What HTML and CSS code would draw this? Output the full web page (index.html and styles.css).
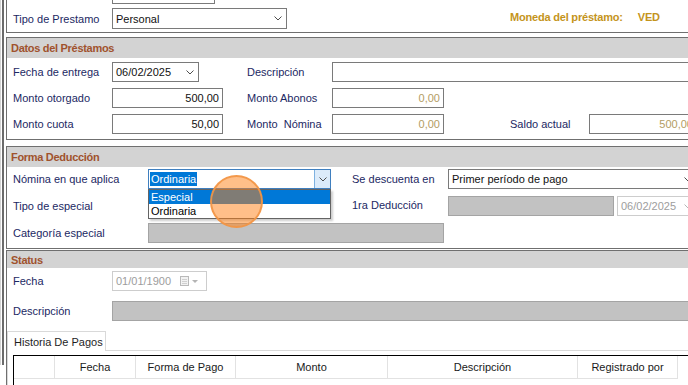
FILE: index.html
```html
<!DOCTYPE html>
<html lang="es">
<head>
  <meta charset="UTF-8">
  <title>Préstamo</title>
  <link rel="stylesheet" href="styles.css">
</head>
<body>
<div class="frame">
<div class="window">

  <!-- encabezado del préstamo -->
  <div class="group top-group">
    <div class="row">
      <span class="label lw99"></span>
      <div class="field w103"></div>
    </div>
    <div class="row row-21">
      <span class="label lw99">Tipo de Prestamo</span>
      <div class="combo w175"><span>Personal</span><svg class="chev" width="8" height="5" viewBox="0 0 8 5"><path d="M0.5 0.5 4 4 7.5 0.5"/></svg></div>
      <span class="currency">Moneda del préstamo:<span class="cur-code">VED</span></span>
    </div>
  </div>

  <section class="group datos">
    <div class="group-title">Datos del Préstamos</div>
    <div class="group-body">
      <div class="row">
        <span class="label lw99">Fecha de entrega</span>
        <div class="combo w87"><span>06/02/2025</span><svg class="chev" width="8" height="5" viewBox="0 0 8 5"><path d="M0.5 0.5 4 4 7.5 0.5"/></svg></div>
        <span class="label lw85 ml48">Descripción</span>
        <div class="field w380"></div>
      </div>
      <div class="row">
        <span class="label lw99">Monto otorgado</span>
        <div class="field num w111">500,00</div>
        <span class="label lw85 ml24">Monto Abonos</span>
        <div class="field num muted w112">0,00</div>
      </div>
      <div class="row">
        <span class="label lw99">Monto cuota</span>
        <div class="field num w111">50,00</div>
        <span class="label lw85 ml24">Monto&nbsp; Nómina</span>
        <div class="field num muted w112">0,00</div>
        <span class="label lw79 ml66">Saldo actual</span>
        <div class="field num muted w108">500,00</div>
      </div>
    </div>
  </section>

  <section class="group forma">
    <div class="group-title">Forma Deducción</div>
    <div class="group-body">
      <div class="row">
        <span class="label lw135">Nómina en que aplica</span>
        <div class="combo-wrap w183">
          <div class="combo focus">
            <span class="selected">Ordinaria</span>
            <span class="drop-btn"><svg class="chev" width="8" height="5" viewBox="0 0 8 5"><path d="M0.5 0.5 4 4 7.5 0.5"/></svg></span>
          </div>
          <ul class="drop-list">
            <li class="active">Especial</li>
            <li>Ordinaria</li>
          </ul>
          <div class="cursor-ring"></div>
        </div>
        <span class="label lw96 ml21">Se descuenta en</span>
        <div class="combo w249"><span>Primer período de pago</span><svg class="chev" width="8" height="5" viewBox="0 0 8 5"><path d="M0.5 0.5 4 4 7.5 0.5"/></svg></div>
      </div>
      <div class="row">
        <span class="label lw135">Tipo de especial</span>
        <div class="field off w183"></div>
        <span class="label lw96 ml21 raise">1ra Deducción</span>
        <div class="field off w166"></div>
        <div class="combo off ml3 w80"><span>06/02/2025</span><svg class="chev" width="8" height="5" viewBox="0 0 8 5"><path d="M0.5 0.5 4 4 7.5 0.5"/></svg></div>
      </div>
      <div class="row">
        <span class="label lw135">Categoría especial</span>
        <div class="field off w296"></div>
      </div>
    </div>
  </section>

  <section class="group status">
    <div class="group-title">Status</div>
    <div class="group-body">
      <div class="row">
        <span class="label lw99">Fecha</span>
        <div class="combo off w95">
          <span>01/01/1900</span>
          <span class="cal-btn">
            <svg width="9" height="10" viewBox="0 0 9 10"><rect x="0.5" y="0.5" width="8" height="9" fill="#f2f2f2" stroke="#b9b9b9"/><path d="M2 3.5h5M2 5.5h5M2 7.5h5" stroke="#d0d0d0"/></svg>
            <svg width="6" height="3" viewBox="0 0 6 3"><path d="M0 0h6L3 3z" fill="#b4b4b4"/></svg>
          </span>
        </div>
      </div>
      <div class="row">
        <span class="label lw99">Descripción</span>
        <div class="field off w600"></div>
      </div>

      <div class="tabs">
        <div class="tab-strip">
          <span class="tab">Historia De Pagos</span>
        </div>
        <div class="tab-page">
          <div class="grid">
            <div class="grid-head">
              <span></span>
              <span>Fecha</span>
              <span>Forma de Pago</span>
              <span>Monto</span>
              <span>Descripción</span>
              <span>Registrado por</span>
            </div>
          </div>
        </div>
      </div>
    </div>
  </section>

</div>
</div>
</body>
</html>
```

FILE: styles.css
```css
* {
  box-sizing: border-box;
}
body {
  margin: 0;
  width: 688px;
  height: 385px;
  overflow: hidden;
  background: #fff;
  font-family: "Liberation Sans", Arial, sans-serif;
  font-size: 11px;
  color: #1c2863;
}
.frame {
  height: 100%;
  border-left: 1px solid #d4d4d4;
  padding-left: 1px;
}
.window {
  height: 100%;
  width: 740px;
  border-left: 2px solid #6b6b6b;
  padding-left: 2px;
}

/* group boxes */
.group {
  border: 1px solid #6f6f6f;
  border-right: none;
}
.top-group {
  margin-top: -20px;
  padding: 3px 6px 3px;
  display: flex;
  flex-direction: column;
  gap: 4px;
}
.group-title {
  height: 20px;
  background: #d3d3d3;
  padding-left: 4px;
  display: flex;
  align-items: center;
  font-weight: bold;
  color: #a0522d;
  letter-spacing: -0.3px;
}
.group-body {
  display: flex;
  flex-direction: column;
  padding: 4px 6px 5px;
  gap: 6px;
}
.datos {
  margin-top: 4px;
}
.forma {
  margin-top: 6px;
}
.forma .group-body {
  padding-top: 2px;
  gap: 7px;
}
.status {
  margin-top: 1px;
  border-bottom: none;
}
.status .group-title {
  height: 17px;
}
.status .group-body {
  padding: 3px 6px 0;
  gap: 10px;
}

/* rows and fields */
.row {
  display: flex;
  align-items: center;
  height: 20px;
}
.row-21 {
  height: 21px;
}
.label {
  flex: none;
  white-space: nowrap;
}
.raise {
  margin-top: -3px;
}
.field,
.combo {
  flex: none;
  height: 20px;
  border: 1px solid #7a7a7a;
  background: #fff;
  color: #111;
  display: flex;
  align-items: center;
  padding: 0 3px;
  white-space: nowrap;
}
.row-21 .combo {
  height: 21px;
}
.field.num {
  justify-content: flex-end;
}
.field.muted {
  color: #b39d64;
}
.field.off {
  background: #c2c2c2;
  border-color: #a4a4a4;
}
.combo {
  justify-content: space-between;
  padding-right: 4px;
}
.combo.off {
  border-color: #cdcdcd;
  color: #9d9d9d;
}
.combo.off .chev path {
  stroke: #b5b5b5;
}
.chev path {
  fill: none;
  stroke: #4d4d4d;
}
.cal-btn {
  display: flex;
  align-items: center;
  gap: 3px;
  margin-right: 4px;
}
.currency {
  margin-left: 223px;
  margin-top: -4px;
  font-weight: bold;
  color: #c4941c;
  letter-spacing: -0.2px;
}
.cur-code {
  margin-left: 15px;
}

/* focused combo with its open list */
.combo-wrap {
  position: relative;
  flex: none;
  height: 20px;
}
.combo.focus {
  width: 100%;
  border-color: #3f7fbf;
  padding: 0 0 0 1px;
}
.selected {
  background: #0078d7;
  color: #fff;
  padding: 1px 1px;
}
.drop-btn {
  width: 16px;
  height: 100%;
  background: #dcebfa;
  border-left: 1px solid #7eb1e0;
  display: flex;
  align-items: center;
  justify-content: center;
}
.drop-list {
  position: absolute;
  top: 20px;
  left: 0;
  width: 100%;
  margin: 0;
  padding: 0;
  list-style: none;
  border: 1px solid #646464;
  background: #fff;
  color: #000;
  box-shadow: 2px 2px 2px rgba(0, 0, 0, 0.2);
  z-index: 2;
}
.drop-list li {
  height: 14px;
  line-height: 14px;
  padding-left: 2px;
}
.drop-list li.active {
  background: #0078d7;
  color: #fff;
}
.cursor-ring {
  position: absolute;
  left: 62px;
  top: 6px;
  width: 53px;
  height: 53px;
  border-radius: 50%;
  background: rgba(255, 128, 20, 0.5);
  border: 2px solid rgba(242, 150, 70, 0.9);
  z-index: 3;
}

/* widths */
.lw79 { width: 79px; }
.lw85 { width: 85px; }
.lw96 { width: 96px; }
.lw99 { width: 99px; }
.lw135 { width: 135px; }
.ml3 { margin-left: 3px; }
.ml21 { margin-left: 21px; }
.ml24 { margin-left: 24px; }
.ml48 { margin-left: 48px; }
.ml66 { margin-left: 66px; }
.w80 { width: 80px; }
.w87 { width: 87px; }
.w95 { width: 95px; }
.w103 { width: 103px; }
.w108 { width: 108px; }
.w111 { width: 111px; }
.w112 { width: 112px; }
.w166 { width: 166px; }
.w175 { width: 175px; }
.w183 { width: 183px; }
.w249 { width: 249px; }
.w296 { width: 296px; }
.w380 { width: 380px; }
.w600 { width: 600px; }

/* tab control and grid */
.tabs {
  margin-left: -6px;
}
.tab-strip {
  display: flex;
}
.tab {
  height: 20px;
  width: 99px;
  margin-bottom: -1px;
  padding-left: 6px;
  display: flex;
  align-items: center;
  border: 1px solid #d9d9d9;
  border-bottom: none;
  background: #fff;
  color: #1e1e1e;
  position: relative;
  z-index: 1;
}
.tab-page {
  border-top: 1px solid #d9d9d9;
  border-left: 1px solid #d9d9d9;
  padding: 4px 0 0 5px;
  height: 60px;
}
.grid {
  width: 700px;
  height: 60px;
  border-top: 1px solid #000;
  border-left: 1px solid #000;
}
.grid-head {
  display: grid;
  grid-template-columns: 41px 81px 100px 152px 190px 100px;
  height: 23px;
}
.grid-head span {
  display: flex;
  align-items: center;
  justify-content: center;
  border-right: 1px solid #e2e2e2;
  border-bottom: 1px solid #e2e2e2;
  color: #1a1a1a;
}
```
